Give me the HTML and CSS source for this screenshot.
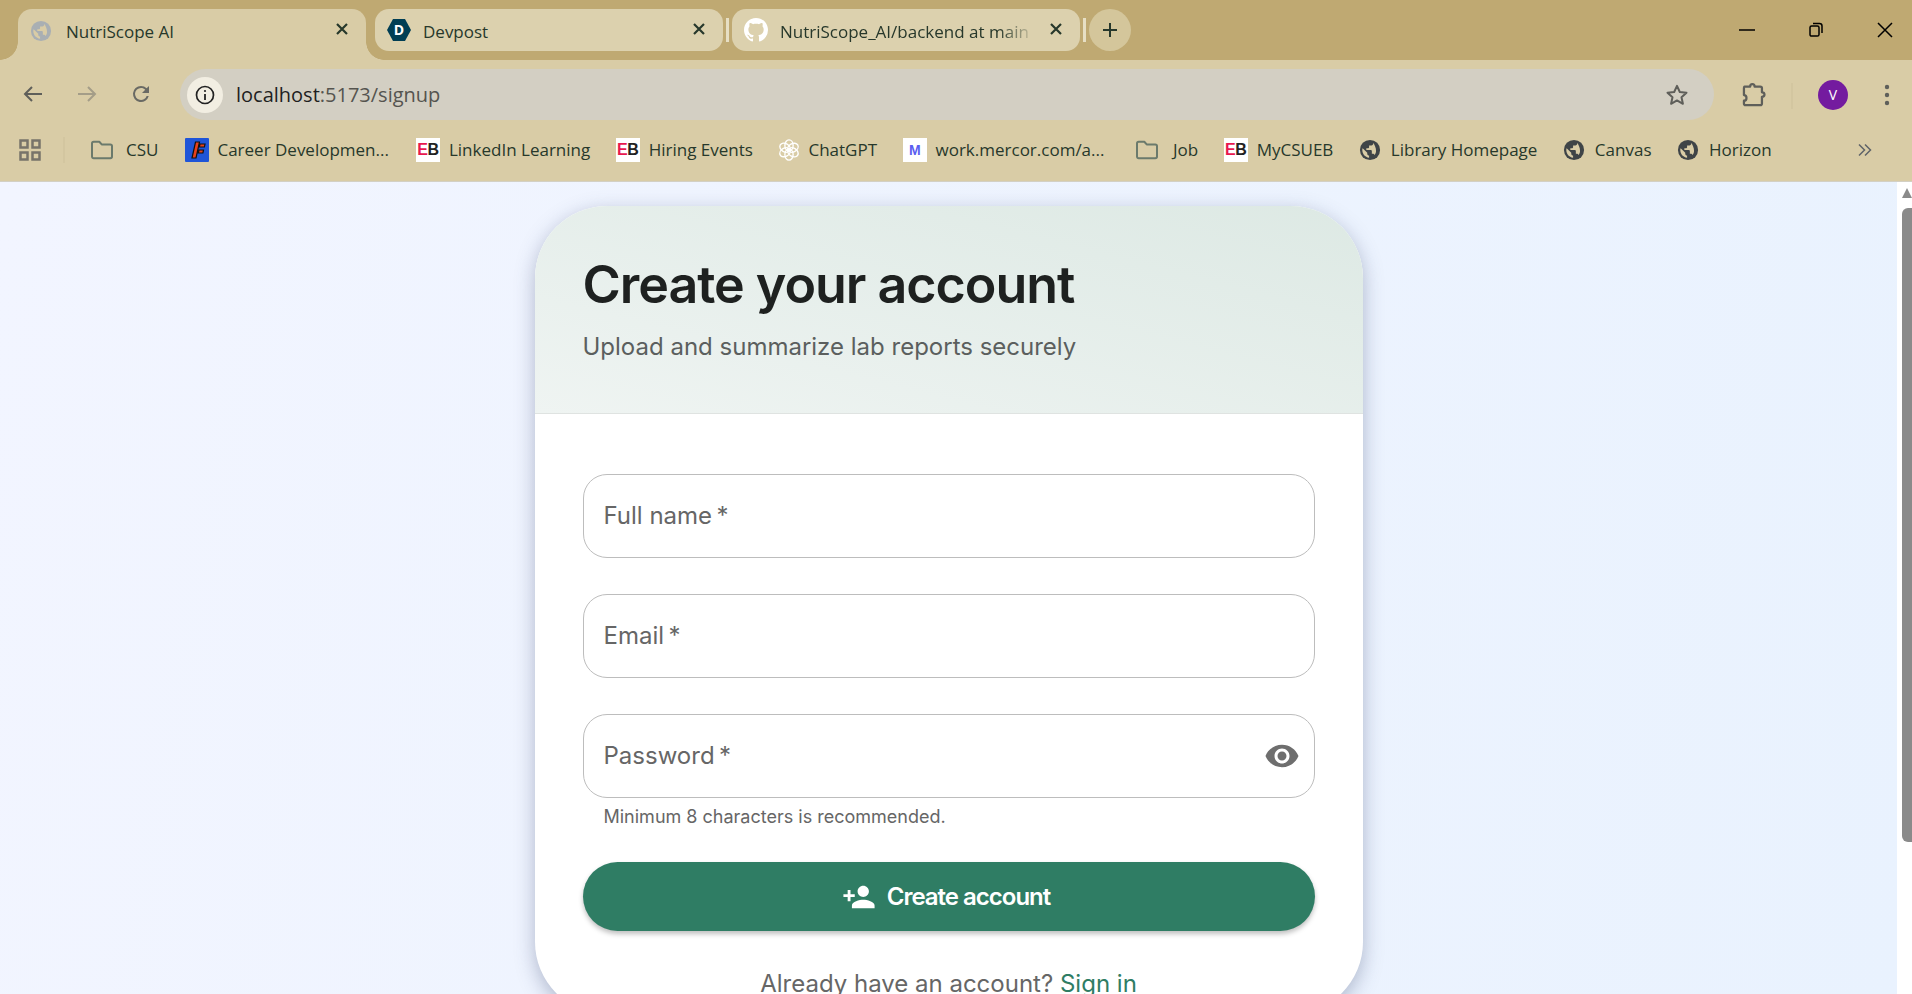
FILE: index.html
```html
<!DOCTYPE html>
<html lang="en">
<head>
    <meta charset="UTF-8">
    <meta name="viewport" content="width=device-width, initial-scale=1.0">
    <title>NutriScope AI</title>
    <link rel="stylesheet" href="styles.css">
</head>
<body>

<svg class="icon-defs" aria-hidden="true">
    <symbol id="globe" viewBox="0 0 24 24">
        <circle cx="12" cy="12" r="11"/>
        <path fill="#d9cca6" d="M4 10.2 9 15v1c0 1.1.9 2 2 2v2.4c-4.4-.5-7.4-4-7.4-8.4 0-.6.1-1.2.4-1.8zM15.6 4.2v.8c0 1.1-.9 2-2 2H11v2c0 .6-.4 1-1 1H8v2h5c.6 0 1 .4 1 1v3h1c.9 0 1.6.6 1.9 1.4.9-1 1.7-2.6 1.7-4.4 0-3.3-1.600-6.300-3-8.800z"/>
    </symbol>
    <symbol id="folder" viewBox="0 0 24 20">
        <path fill="none" stroke="currentColor" stroke-width="2" stroke-linejoin="round" d="M2 3.500c0-1 .7-1.700 1.700-1.700h5.600l2.400 2.600h8.600c1 0 1.700.7 1.700 1.700v10.400c0 1-.7 1.700-1.700 1.700H3.700c-1 0-1.700-.7-1.700-1.700z"/>
    </symbol>
    <symbol id="close" viewBox="0 0 16 16">
        <path fill="none" stroke="currentColor" stroke-width="2.200" d="M3 3l10 10M13 3L3 13"/>
    </symbol>
</svg>

<!-- Browser tabs -->
<div class="tabstrip">
    <div class="tab tab-active">
        <svg class="favicon globe-tab"><use href="#globe"/></svg>
        <span class="tab-title">NutriScope AI</span>
        <svg class="tab-close"><use href="#close"/></svg>
    </div>
    <div class="tab tab-devpost">
        <svg class="favicon" viewBox="0 0 24 24">
            <path fill="#003e54" d="M6 1h12l6 11-6 11H6L0 12z"/>
            <text x="12" y="17" text-anchor="middle" class="devpost-d">D</text>
        </svg>
        <span class="tab-title">Devpost</span>
        <svg class="tab-close"><use href="#close"/></svg>
    </div>
    <div class="tab-sep"></div>
    <div class="tab">
        <svg class="favicon" viewBox="0 0 16 16">
            <path fill="#fff" d="M8 0C3.580 0 0 3.580 0 8c0 3.540 2.290 6.530 5.470 7.590.4.070.55-.17.55-.38 0-.19-.01-.82-.01-1.490-2.010.37-2.530-.49-2.690-.94-.09-.23-.48-.94-.82-1.130-.28-.15-.68-.52-.01-.53.63-.01 1.080.58 1.230.82.720 1.210 1.870.87 2.330.66.070-.52.280-.87.510-1.070-1.780-.2-3.640-.89-3.640-3.950 0-.87.310-1.590.820-2.150-.08-.2-.36-1.020.08-2.120 0 0 .67-.21 2.200.82.640-.18 1.320-.27 2-.27s1.360.09 2 .27c1.530-1.040 2.200-.82 2.200-.82.440 1.100.16 1.920.08 2.120.51.560.82 1.270.82 2.150 0 3.070-1.870 3.750-3.650 3.950.29.250.54.730.54 1.480 0 1.070-.01 1.930-.01 2.200 0 .21.150.46.550.38A8.010 8.010 0 0 0 16 8c0-4.420-3.580-8-8-8z"/>
        </svg>
        <span class="tab-title tab-title-fade">NutriScope_AI/backend at main</span>
        <svg class="tab-close"><use href="#close"/></svg>
    </div>
    <div class="tab-sep"></div>
    <div class="new-tab">
        <svg viewBox="0 0 16 16"><path fill="none" stroke="currentColor" stroke-width="2" d="M8 1v14M1 8h14"/></svg>
    </div>
    <div class="window-controls">
        <svg viewBox="0 0 16 16"><path stroke="#000" stroke-width="1.500" d="M0 8h16"/></svg>
        <svg viewBox="0 0 16 16"><path fill="none" stroke="#000" stroke-width="1.500" d="M2 5.500c0-1 .6-1.600 1.600-1.600h5.800c1 0 1.600.6 1.600 1.600v7c0 1-.6 1.600-1.600 1.600H3.600c-1 0-1.600-.6-1.600-1.600zM5 1.500h6.500c1.500 0 2.500 1 2.500 2.500v7"/></svg>
        <svg viewBox="0 0 16 16"><path fill="none" stroke="#000" stroke-width="1.500" d="M1 1l14 14M15 1L1 15"/></svg>
    </div>
</div>

<!-- Address bar row -->
<div class="toolbar">
    <svg class="nav-icon" viewBox="0 0 24 24"><path fill="none" stroke="#5f5f5a" stroke-width="2" d="M21 12H4M11 5l-7 7 7 7"/></svg>
    <svg class="nav-icon" viewBox="0 0 24 24"><path fill="none" stroke="#a49d88" stroke-width="2" d="M3 12h17M13 5l7 7-7 7"/></svg>
    <svg class="nav-icon" viewBox="0 0 24 24"><path fill="#6a6a64" d="M17.650 6.350A7.960 7.960 0 0 0 12 4a8 8 0 1 0 7.730 10h-2.080A6 6 0 1 1 12 6c1.660 0 3.140.69 4.220 1.780L13 11h7V4z"/></svg>
    <div class="addressbar">
        <div class="site-info">
            <svg viewBox="0 0 20 20"><circle cx="10" cy="10" r="8.500" fill="none" stroke="#222" stroke-width="1.700"/><path stroke="#222" stroke-width="1.800" d="M10 9v6"/><circle cx="10" cy="6" r="1.100" fill="#222"/></svg>
        </div>
        <span class="url"><span class="url-host">localhost</span>:5173/signup</span>
        <svg class="star" viewBox="0 0 24 24"><path fill="none" stroke="#5f5f5a" stroke-width="2" stroke-linejoin="round" d="M12 2.800l2.800 6.200 6.700.7-5 4.500 1.400 6.600-5.900-3.400-5.900 3.400 1.400-6.600-5-4.500 6.700-.7z"/></svg>
    </div>
    <svg class="puzzle" viewBox="0 0 24 24"><path fill="none" stroke="#5f5f5a" stroke-width="2" stroke-linejoin="round" d="M4 5h5c0-3 4-3 4 0h5c1 0 1.500.5 1.500 1.500V10c3 0 3 4 0 4v6c0 1-.5 1.500-1.500 1.500H5c-1 0-1.500-.5-1.500-1.500v-2.500c3 0 3-5 0-5V6.500C3.500 5.500 4 5 4 5z"/></svg>
    <div class="toolbar-sep"></div>
    <div class="avatar">V</div>
    <svg class="menu-dots" viewBox="0 0 6 24"><circle cx="3" cy="4" r="2.200"/><circle cx="3" cy="12" r="2.200"/><circle cx="3" cy="20" r="2.200"/></svg>
</div>

<!-- Bookmarks bar -->
<div class="bookmarks">
    <svg class="apps" viewBox="0 0 22 22">
        <path fill="none" stroke="#77736a" stroke-width="2.500" d="M1.500 1.500h7v7h-7zM13.500 1.500h7v7h-7zM1.500 13.500h7v7h-7zM13.500 13.500h7v7h-7z"/>
    </svg>
    <div class="bookmarks-sep"></div>
    <div class="mark mark-csu"><svg class="bm-folder"><use href="#folder"/></svg>CSU</div>
    <div class="mark mark-career">
        <svg class="bm-icon" viewBox="0 0 24 24">
            <rect width="24" height="24" rx="1" fill="#1f55d8"/>
            <path fill="#e8401c" stroke="#111" stroke-width="1.200" d="M7 20L10.500 4h4L11 20zM15 6h5l-.6 3h-5zM14 12h4.500l-.6 3h-4.500z"/>
        </svg>Career Developmen...
    </div>
    <div class="mark"><span class="eb"><b>E</b>B</span>LinkedIn Learning</div>
    <div class="mark"><span class="eb"><b>E</b>B</span>Hiring Events</div>
    <div class="mark">
        <svg class="bm-icon gpt" viewBox="0 0 24 24">
            <g fill="none" stroke="#fff" stroke-width="1.500">
                <ellipse cx="12" cy="7" rx="4.500" ry="6"/>
                <ellipse cx="12" cy="7" rx="4.500" ry="6" transform="rotate(60 12 12)"/>
                <ellipse cx="12" cy="7" rx="4.500" ry="6" transform="rotate(120 12 12)"/>
                <ellipse cx="12" cy="7" rx="4.500" ry="6" transform="rotate(180 12 12)"/>
                <ellipse cx="12" cy="7" rx="4.500" ry="6" transform="rotate(240 12 12)"/>
                <ellipse cx="12" cy="7" rx="4.500" ry="6" transform="rotate(300 12 12)"/>
            </g>
        </svg>ChatGPT
    </div>
    <div class="mark"><span class="eb mercor">M</span>work.mercor.com/a...</div>
    <div class="mark mark-job"><svg class="bm-folder"><use href="#folder"/></svg>Job</div>
    <div class="mark"><span class="eb"><b>E</b>B</span>MyCSUEB</div>
    <div class="mark"><svg class="bm-globe"><use href="#globe"/></svg>Library Homepage</div>
    <div class="mark"><svg class="bm-globe"><use href="#globe"/></svg>Canvas</div>
    <div class="mark"><svg class="bm-globe"><use href="#globe"/></svg>Horizon</div>
    <svg class="more" viewBox="0 0 14 14"><path fill="none" stroke="#5f6368" stroke-width="1.500" d="M1 1.500L6.500 7 1 12.500M7 1.500L12.500 7 7 12.500"/></svg>
</div>

<!-- The page itself -->
<div class="viewport">
    <div class="page">
        <div class="card">
            <div class="card-header">
                <h1>Create your account</h1>
                <p>Upload and summarize lab reports securely</p>
            </div>
            <form class="card-body">
                <input class="field" type="text" placeholder="Full name&#8201;*">
                <input class="field" type="email" placeholder="Email&#8201;*">
                <div class="password-wrap">
                    <input class="field" type="password" placeholder="Password&#8201;*">
                    <svg class="eye" viewBox="0 0 24 24"><path d="M12 4.500C7 4.500 2.730 7.610 1 12c1.730 4.390 6 7.500 11 7.500s9.270-3.110 11-7.500c-1.730-4.390-6-7.500-11-7.500zM12 17c-2.760 0-5-2.240-5-5s2.240-5 5-5 5 2.240 5 5-2.240 5-5 5zm0-8c-1.660 0-3 1.340-3 3s1.340 3 3 3 3-1.340 3-3-1.340-3-3-3z"/></svg>
                </div>
                <div class="helper">Minimum 8 characters is recommended.</div>
                <button type="button" class="submit">
                    <svg viewBox="0 0 24 24"><path d="M15 12c2.210 0 4-1.790 4-4s-1.790-4-4-4-4 1.790-4 4 1.790 4 4 4zm-9-2V7H4v3H1v2h3v3h2v-3h3v-2H6zm9 4c-2.670 0-8 1.340-8 4v2h16v-2c0-2.660-5.330-4-8-4z"/></svg>
                    Create account
                </button>
                <div class="signin">Already have an account? <a href="#">Sign in</a></div>
            </form>
        </div>
    </div>
    <div class="scrollbar">
        <div class="scroll-up"></div>
        <div class="scroll-thumb"></div>
    </div>
</div>

</body>
</html>
```

FILE: styles.css
```css
* {
    box-sizing: border-box;
}
html, body {
    height: 100%;
}
body {
    margin: 0;
    display: flex;
    flex-direction: column;
    overflow: hidden;
    font-family: Inter, "Noto Sans", sans-serif;
    background-color: #eef4ff;
}
.icon-defs {
    display: none;
}

/* tabs */
.tabstrip {
    height: 60px;
    flex: none;
    display: flex;
    align-items: flex-start;
    padding: 9px 0 0 18px;
    background-color: #bfa972;
    color: #27382b;
    font-family: "Open Sans", sans-serif;
    font-size: 17px;
}
.tab {
    position: relative;
    width: 348px;
    height: 42px;
    flex: none;
    display: flex;
    align-items: center;
    padding: 2px 16px 0 12px;
    border-radius: 14px;
    background-color: #dcd1ae;
}
.tab-active {
    height: 51px;
    padding-top: 2px;
    padding-bottom: 9px;
    margin-right: 9px;
    border-radius: 14px 14px 0 0;
    background-color: #d9cca6;
}
.tab-active::before,
.tab-active::after {
    content: "";
    position: absolute;
    bottom: 0;
    width: 18px;
    height: 18px;
}
.tab-active::before {
    left: -18px;
    background: radial-gradient(circle at 0 0, #bfa972 17.500px, #d9cca6 18px);
}
.tab-active::after {
    right: -18px;
    background: radial-gradient(circle at 100% 0, #bfa972 17.500px, #d9cca6 18px);
}
.favicon {
    width: 24px;
    height: 24px;
    flex: none;
    margin: -2px 12px 0 0;
}
.globe-tab {
    width: 22px;
    height: 22px;
    margin: 0 14px 0 0;
    fill: #a9afb3;
}
.devpost-d {
    font-family: "Open Sans", sans-serif;
    font-size: 14px;
    font-weight: 700;
    fill: #fff;
}
.tab-title {
    flex: 1;
    white-space: nowrap;
    overflow: hidden;
}
.tab-title-fade {
    -webkit-mask-image: linear-gradient(to right, #000 85%, transparent);
    mask-image: linear-gradient(to right, #000 85%, transparent);
}
.tab-close {
    width: 16px;
    height: 16px;
    flex: none;
    margin-left: 12px;
    margin-top: -4px;
}
.tab-sep {
    width: 3px;
    height: 24px;
    flex: none;
    margin: 9px 3px 0;
    background-color: #e7dfc4;
}
.new-tab {
    width: 42px;
    height: 42px;
    flex: none;
    display: flex;
    align-items: center;
    justify-content: center;
    border-radius: 50%;
    background-color: #d4c69b;
}
.new-tab svg {
    width: 16px;
    height: 16px;
}
.window-controls {
    margin-left: auto;
    height: 42px;
    display: flex;
    align-items: center;
    gap: 53px;
    padding-right: 19px;
}
.window-controls svg {
    width: 16px;
    height: 16px;
}

/* address bar */
.toolbar {
    height: 60px;
    flex: none;
    display: flex;
    align-items: flex-start;
    padding: 9px 22px 0 21px;
    background-color: #d9cca6;
}
.nav-icon {
    width: 24px;
    height: 24px;
    flex: none;
    margin: 13px 30px 0 0;
}
.addressbar {
    flex: 1;
    height: 51px;
    display: flex;
    align-items: center;
    margin-left: -3px;
    padding: 0 25px 0 7px;
    border-radius: 26px;
    background-color: #d3cfc3;
}
.site-info {
    width: 36px;
    height: 36px;
    display: flex;
    align-items: center;
    justify-content: center;
    margin-right: 13px;
    border-radius: 50%;
    background-color: #f2eee2;
}
.site-info svg {
    width: 20px;
    height: 20px;
}
.url {
    flex: 1;
    font-family: "Open Sans", sans-serif;
    font-size: 20px;
    color: #55544f;
}
.url-host {
    color: #1f1f1f;
}
.star {
    width: 24px;
    height: 24px;
}
.puzzle {
    width: 27px;
    height: 27px;
    flex: none;
    margin: 12px 0 0 26px;
}
.toolbar-sep {
    width: 2px;
    height: 26px;
    margin: 14px 0 0 24px;
    background-color: #d3c6a0;
}
.avatar {
    width: 30px;
    height: 30px;
    flex: none;
    margin: 11px 0 0 25px;
    border-radius: 50%;
    background-color: #741b9f;
    color: #fff;
    font-family: "Open Sans", sans-serif;
    font-size: 14px;
    line-height: 30px;
    text-align: center;
}
.menu-dots {
    width: 6px;
    height: 24px;
    flex: none;
    margin: 14px 0 0 36px;
    fill: #5f5f5a;
}

/* bookmarks */
.bookmarks {
    height: 62px;
    flex: none;
    display: flex;
    align-items: center;
    padding: 0 0 2px 19px;
    background-color: #d9cca6;
    border-bottom: 1px solid #d3d0c4;
    color: #27382b;
    font-family: "Open Sans", sans-serif;
    font-size: 17px;
}
.apps {
    width: 22px;
    height: 22px;
    flex: none;
}
.bookmarks-sep {
    width: 2px;
    height: 26px;
    margin: 0 25px 0 22px;
    background-color: #d3c6a0;
}
.mark {
    display: flex;
    align-items: center;
    margin-right: 25.500px;
    white-space: nowrap;
}
.mark-csu,
.mark-career {
    margin-right: 27px;
}
.mark-job {
    margin-left: 5px;
}
.mark-job .bm-folder {
    margin-right: 14px;
}
.bm-folder {
    width: 24px;
    height: 20px;
    margin-right: 12px;
    color: #6b7a6c;
}
.bm-icon {
    width: 24px;
    height: 24px;
    margin-right: 8px;
}
.gpt {
    width: 22px;
    height: 22px;
}
.bm-globe {
    width: 22px;
    height: 22px;
    margin-right: 10px;
    fill: #3f4447;
}
.eb {
    width: 24px;
    height: 24px;
    margin-right: 9px;
    display: flex;
    align-items: center;
    justify-content: center;
    background-color: #fff;
    color: #222;
    font-family: "Liberation Sans", sans-serif;
    font-size: 16px;
    font-weight: 700;
    letter-spacing: -0.5px;
}
.eb b {
    color: #e8174e;
}
.mercor {
    color: #5a5df0;
    font-size: 14px;
}
.more {
    width: 14px;
    height: 14px;
    margin-left: auto;
    margin-right: 40px;
}

/* page */
.viewport {
    flex: 1;
    min-height: 0;
    display: flex;
}
.page {
    flex: 1;
    min-width: 0;
    overflow: hidden;
    padding-top: 24px;
    background: linear-gradient(100deg, #f2f5ff, #e9f2fe);
}
.card {
    width: 828px;
    margin: 0 auto;
    border-radius: 72px;
    background-color: #fff;
    box-shadow: 0 6px 20px rgba(60, 75, 115, 0.36);
    overflow: hidden;
}
.card-header {
    height: 208px;
    padding: 47px 48px 0;
    border-bottom: 1px solid #dfe3e1;
    background: linear-gradient(to top right, #eff4f2, #dde9e4);
}
.card-header h1 {
    margin: 0;
    font-size: 52px;
    font-weight: 600;
    line-height: 64px;
    letter-spacing: -1.04px;
    color: #1e2120;
}
.card-header p {
    margin: 14px 0 0;
    font-size: 24px;
    line-height: 32px;
    color: #5b5f5e;
}
.card-body {
    padding: 60px 48px 0;
    height: 600px;
}
.field {
    display: block;
    width: 100%;
    height: 84px;
    margin-bottom: 36px;
    padding: 0 20px 2px;
    border: 1px solid #bdbdbd;
    border-radius: 24px;
    outline: none;
    font-family: inherit;
    font-size: 24px;
    background: transparent;
}
.field::placeholder {
    color: #666;
    opacity: 1;
}
.password-wrap {
    position: relative;
}
.password-wrap .field {
    margin-bottom: 0;
}
.eye {
    position: absolute;
    right: 15px;
    top: 24px;
    width: 36px;
    height: 36px;
    fill: #6e6e6e;
}
.helper {
    margin: 7px 20px 0 21px;
    font-size: 18px;
    line-height: 24px;
    color: #666;
}
.submit {
    width: 100%;
    height: 69px;
    margin-top: 33px;
    padding: 0 5px 0 0;
    display: flex;
    align-items: center;
    justify-content: center;
    gap: 11px;
    border: none;
    border-radius: 35px;
    background-color: #2f7d64;
    box-shadow: 0 3px 5px rgba(0, 0, 0, 0.25);
    color: #fff;
    font-family: inherit;
    font-size: 24px;
    font-weight: 600;
    letter-spacing: -1px;
}
.submit svg {
    width: 34px;
    height: 34px;
    fill: #fff;
}
.signin {
    margin-top: 37px;
    text-align: center;
    font-size: 24px;
    line-height: 32px;
    color: #666;
}
.signin a {
    color: #2f7d64;
    text-decoration: none;
}

/* fake scrollbar */
.scrollbar {
    width: 15px;
    flex: none;
    background-color: #fff;
    padding-left: 5px;
}
.scroll-up {
    width: 0;
    height: 0;
    margin: 6px 0 10px;
    border-left: 5px solid transparent;
    border-right: 5px solid transparent;
    border-bottom: 10px solid #8a8a8a;
}
.scroll-thumb {
    height: 634px;
    border-radius: 6px 0 0 6px;
    background-color: #8a8a8a;
}
```
